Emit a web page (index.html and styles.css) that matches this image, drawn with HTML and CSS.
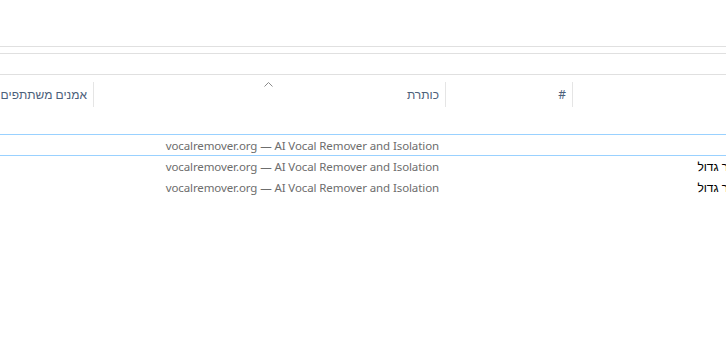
FILE: index.html
```html
<!DOCTYPE html>
<html lang="he">
<head>
  <meta charset="UTF-8" />
  <title>תיקייה</title>
  <link rel="stylesheet" href="styles.css">
</head>
<body>
  <div class="toolbar"></div>
  <div class="address-strip"></div>

  <div class="view">
    <div class="list">
      <div class="header">
        <div class="col col-name"><span class="head-cell"></span></div>
        <div class="col col-num"><span class="head-cell">#</span></div>
        <div class="col col-title">
          <span class="head-cell">כותרת</span>
          <svg class="sort-caret" width="9" height="5" viewBox="0 0 9 5">
            <polyline points="0.5,4.5 4.5,0.5 8.5,4.5" fill="none" stroke="#8a8a8a" stroke-width="1" />
          </svg>
        </div>
        <div class="col col-artists"><span class="head-cell">אמנים משתתפים</span></div>
      </div>

      <div class="row focused">
        <div class="col col-name"></div>
        <div class="col col-num"></div>
        <div class="col col-title">vocalremover.org — AI Vocal Remover and Isolation</div>
        <div class="col col-artists"></div>
      </div>
      <div class="row">
        <div class="col col-name">שיר גדול</div>
        <div class="col col-num"></div>
        <div class="col col-title">vocalremover.org — AI Vocal Remover and Isolation</div>
        <div class="col col-artists"></div>
      </div>
      <div class="row">
        <div class="col col-name">שיר גדול</div>
        <div class="col col-num"></div>
        <div class="col col-title">vocalremover.org — AI Vocal Remover and Isolation</div>
        <div class="col col-artists"></div>
      </div>
    </div>
  </div>
</body>
</html>
```

FILE: styles.css
```css
:root {
  --line: #e0e0e0;
  --separator: #e5e5e5;
  --head-text: #4c607a;
  --muted-text: #6d6d6d;
  --focus: #99d1ff;
}

*, *::before, *::after {
  box-sizing: border-box;
}

body {
  margin: 0;
  background: #ffffff;
  font-family: 'Noto Sans', 'Liberation Sans', sans-serif;
  font-size: 12px;
  color: #1a1a1a;
}

.toolbar {
  height: 47px;
  border-bottom: 1px solid var(--line);
}

.address-strip {
  margin-top: 6px;
  height: 22px;
  border-top: 1px solid var(--line);
  border-bottom: 1px solid var(--line);
}

.view {
  overflow: hidden;
}

/* the list is scrolled a bit to the side, the name column runs past the window */
.list {
  direction: rtl;
  margin-right: -20px;
}

.header,
.row {
  display: flex;
}

.col {
  flex: none;
  white-space: nowrap;
  overflow: hidden;
  padding-right: 6px;
}

.col-name {
  width: 174px;
}

.col-num {
  width: 127px;
}

.col-title {
  width: 352px;
}

.col-artists {
  flex: 1;
  min-width: 0;
}

.header {
  height: 59px;
}

.header .col {
  padding: 0;
  position: relative;
  overflow: visible;
}

.header .col-artists {
  overflow: hidden;
}

.head-cell {
  display: flex;
  align-items: center;
  height: 25px;
  margin-top: 7px;
  padding-right: 6px;
  color: var(--head-text);
  border-left: 1px solid var(--separator);
}

.col-artists .head-cell {
  border-left: none;
}

.sort-caret {
  position: absolute;
  top: 7px;
  left: 50%;
  margin-left: -5px;
}

.row {
  height: 21px;
  align-items: center;
}

.row.focused {
  height: 22px;
  border-top: 1px solid var(--focus);
  border-bottom: 1px solid var(--focus);
}

.row .col-title {
  color: var(--muted-text);
  font-size: 11.5px;
  letter-spacing: -0.1px;
}

.row .col-name {
  color: #000000;
}
```
